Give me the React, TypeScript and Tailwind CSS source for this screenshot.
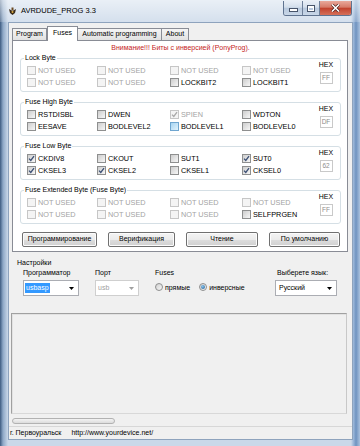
import React from 'react'

// ── Tipos ─────────────────────────────────────────────────────────────
type Cb = 'dis' | 'off' | 'on' | 'disOn' | 'hot'

interface Bit {
  label: string
  s: Cb
}

interface FuseGroup {
  title: string
  hex: string
  rows: Bit[][]
}

const nu: Bit = { label: 'NOT USED', s: 'dis' }

const groups: FuseGroup[] = [
  {
    title: 'Lock Byte',
    hex: 'FF',
    rows: [
      [nu, nu, nu, nu],
      [nu, nu, { label: 'LOCKBIT2', s: 'off' }, { label: 'LOCKBIT1', s: 'off' }],
    ],
  },
  {
    title: 'Fuse High Byte',
    hex: 'DF',
    rows: [
      [
        { label: 'RSTDISBL', s: 'off' },
        { label: 'DWEN', s: 'off' },
        { label: 'SPIEN', s: 'disOn' },
        { label: 'WDTON', s: 'off' },
      ],
      [
        { label: 'EESAVE', s: 'off' },
        { label: 'BODLEVEL2', s: 'off' },
        { label: 'BODLEVEL1', s: 'hot' },
        { label: 'BODLEVEL0', s: 'off' },
      ],
    ],
  },
  {
    title: 'Fuse Low Byte',
    hex: '62',
    rows: [
      [
        { label: 'CKDIV8', s: 'on' },
        { label: 'CKOUT', s: 'off' },
        { label: 'SUT1', s: 'off' },
        { label: 'SUT0', s: 'on' },
      ],
      [
        { label: 'CKSEL3', s: 'on' },
        { label: 'CKSEL2', s: 'on' },
        { label: 'CKSEL1', s: 'off' },
        { label: 'CKSEL0', s: 'on' },
      ],
    ],
  },
  {
    title: 'Fuse Extended Byte (Fuse Byte)',
    hex: 'FF',
    rows: [
      [nu, nu, nu, nu],
      [nu, nu, nu, { label: 'SELFPRGEN', s: 'off' }],
    ],
  },
]

// ── Controles ─────────────────────────────────────────────────────────
function Box({ s }: { s: Cb }) {
  const dis = s === 'dis' || s === 'disOn'
  const cls = dis
    ? 'flex w-[9px] h-[9px] shrink-0 items-center justify-center border border-[#c6c6c6] bg-[#f4f4f4]'
    : s === 'hot'
      ? 'flex w-[9px] h-[9px] shrink-0 items-center justify-center border border-[#6fa6d0] bg-[linear-gradient(135deg,#a6d4f2,#e2f3fc)]'
      : 'flex w-[9px] h-[9px] shrink-0 items-center justify-center border border-[#8e8f8f] bg-[linear-gradient(135deg,#cdcdcd,#f7f7f7)]'
  return (
    <span className={cls}>
      {(s === 'on' || s === 'disOn') && (
        <svg width="7" height="7" viewBox="0 0 7 7">
          <path
            d="M1 3.6 L2.8 5.5 L6 1.2"
            fill="none"
            stroke={s === 'on' ? '#3b4f74' : '#a8a8a8'}
            strokeWidth="1.3"
          />
        </svg>
      )}
    </span>
  )
}

function Check({ bit }: { bit: Bit }) {
  const dis = bit.s === 'dis' || bit.s === 'disOn'
  return (
    <div className="flex items-center">
      <Box s={bit.s} />
      <span className={`ml-[2px] text-[7.3px] leading-none ${dis ? 'text-[#a3a3a3]' : 'text-black'}`}>
        {bit.label}
      </span>
    </div>
  )
}

function Group({ g }: { g: FuseGroup }) {
  return (
    <fieldset className="rounded-[3px] border border-[#d5dfe5] pl-[6px] pb-[3px]">
      <legend className="-ml-[3px] px-[1px] text-[7px] leading-[8px] text-black">{g.title}</legend>
      <div className="flex">
        <div className="flex flex-col gap-[1px] pt-[3px]">
          {g.rows.map((row, i) => (
            <div key={i} className="grid grid-cols-[70px_73px_72px_70px] h-[11px] items-center">
              {row.map((b, j) => (
                <Check key={j} bit={b} />
              ))}
            </div>
          ))}
        </div>
        <div className="ml-auto w-[28px] flex flex-col items-center -mt-[1px]">
          <span className="text-[7px] leading-[8px] text-black">HEX</span>
          <span className="mt-[3px] w-[13px] h-[12px] border border-[#c9c9c9] bg-white flex items-center justify-center text-[6.5px] text-[#8c8c8c]">
            {g.hex}
          </span>
        </div>
      </div>
    </fieldset>
  )
}

function Button({ label, w }: { label: string; w: string }) {
  return (
    <div
      className={`${w} h-[15px] rounded-[2px] border border-[#707070] bg-[linear-gradient(180deg,#f4f4f4_0%,#ebebeb_50%,#dedede_50%,#d0d0d0_100%)] flex items-center justify-center text-[7px] text-black shadow-[inset_0_0_0_1px_#fcfcfc]`}
    >
      {label}
    </div>
  )
}

function Arrow({ gray }: { gray?: boolean }) {
  return (
    <svg width="5" height="3" viewBox="0 0 5 3" className="shrink-0">
      <path d="M0 0 H5 L2.5 3 Z" fill={gray ? '#a0a0a0' : '#000'} />
    </svg>
  )
}

function Radio({ on, label }: { on?: boolean; label: string }) {
  return (
    <div className="flex items-center">
      <span className="w-[8px] h-[8px] rounded-full border border-[#8e8f8f] bg-[linear-gradient(135deg,#d0d0d0,#f8f8f8)] flex items-center justify-center">
        {on && <span className="w-[4px] h-[4px] rounded-full bg-[radial-gradient(circle_at_40%_35%,#8ac4ec,#1c5a93)]" />}
      </span>
      <span className="ml-[2px] text-[7px] leading-none text-black">{label}</span>
    </div>
  )
}

// ── Janela ────────────────────────────────────────────────────────────
export default function App() {
  return (
    <div className="w-[360px] h-[446px] flex flex-col overflow-hidden font-['Liberation_Sans',Arial,sans-serif] bg-[linear-gradient(90deg,#3d5b80_0px,#8ea8c7_3px,#cad8e9_8px,#cad8e9_351px,#a2bcdc_353px,#6f93c0_356px,#aac1dd_360px)]">
      {/* Barra de título */}
      <div className="h-[22px] flex items-start bg-[linear-gradient(180deg,rgba(255,255,255,0.6),rgba(255,255,255,0.2))]">
        <svg width="9" height="9" viewBox="0 0 9 9" className="ml-[8px] mt-[7px]">
          <path d="M1 2 L4.5 4 L8 2 L7 6 L4.5 8 L2 6 Z" fill="#3a2a1a" />
          <rect x="3.5" y="0.5" width="2" height="3" fill="#6b4a22" />
          <circle cx="4.5" cy="5" r="1" fill="#e0b040" />
        </svg>
        <span className="ml-[4px] mt-[6px] text-[7.5px] leading-[9px] text-black">AVRDUDE_PROG 3.3</span>
        <div className="ml-auto mr-[8px] mt-[1px] flex h-[15px] rounded-b-[3px] border border-t-0 border-[#5f7390] overflow-hidden">
          <div className="w-[19px] flex items-center justify-center border-r border-[#6d7f99] bg-[linear-gradient(180deg,#e8eef6_0%,#d3deeb_45%,#b7c8dd_50%,#c9d7e8_100%)]">
            <span className="mt-[4px] w-[7px] h-[2px] bg-white border border-[#47546a] box-content" />
          </div>
          <div className="w-[17px] flex items-center justify-center border-r border-[#6d7f99] bg-[linear-gradient(180deg,#e8eef6_0%,#d3deeb_45%,#b7c8dd_50%,#c9d7e8_100%)]">
            <span className="w-[6px] h-[5px] border-[1.5px] border-t-[2px] border-white outline outline-1 outline-[#47546a]" />
          </div>
          <div className="w-[31px] flex items-center justify-center bg-[linear-gradient(180deg,#e9a99b_0%,#d67a68_45%,#c1412c_50%,#d5705a_100%)]">
            <svg width="9" height="8" viewBox="0 0 9 8">
              <path d="M1 0.5 L8 7.5 M8 0.5 L1 7.5" stroke="#4a1d18" strokeWidth="3" />
              <path d="M1 0.5 L8 7.5 M8 0.5 L1 7.5" stroke="#fff" strokeWidth="1.6" />
            </svg>
          </div>
        </div>
      </div>

      {/* Área cliente */}
      <div className="flex-1 ml-[8px] mr-[7px] mb-[6px] border border-[#8ea3bd] bg-[#f0f0f0] flex flex-col">
        {/* Abas */}
        <div className="pl-[3px] pr-[4px] pt-[3px]">
          <div className="flex items-end h-[14px] relative z-10">
            <div className="w-[35px] h-[12px] border border-b-0 border-[#898c95] bg-[linear-gradient(180deg,#f5f5f5,#e1e1e1)] flex items-center justify-center text-[7px] text-black">
              Program
            </div>
            <div className="w-[31px] h-[15px] -mb-[1px] border border-b-0 border-[#898c95] bg-white flex items-center justify-center text-[7px] text-black pb-[1px]">
              Fuses
            </div>
            <div className="w-[84px] h-[12px] border border-b-0 border-l-0 border-[#898c95] bg-[linear-gradient(180deg,#f5f5f5,#e1e1e1)] flex items-center justify-center text-[7px] text-black">
              Automatic programming
            </div>
            <div className="w-[27px] h-[12px] border border-b-0 border-l-0 border-[#898c95] bg-[linear-gradient(180deg,#f5f5f5,#e1e1e1)] flex items-center justify-center text-[7px] text-black">
              About
            </div>
          </div>

          {/* Página Fuses */}
          <div className="border border-[#898c95] bg-white pl-[7px] pr-[6px] pt-[3px] pb-[4px]">
            <div className="h-[8px] flex items-center justify-center text-[7px] text-[#c42424]">
              Внимание!!! Биты с инверсией (PonyProg).
            </div>
            <div className="mt-[2px] flex flex-col gap-[6px]">
              {groups.map((g) => (
                <Group key={g.title} g={g} />
              ))}
            </div>
            <div className="mt-[8px] flex justify-between pl-[2px] pr-[1px]">
              <Button label="Программирование" w="w-[75px]" />
              <Button label="Верификация" w="w-[67px]" />
              <Button label="Чтение" w="w-[72px]" />
              <Button label="По умолчанию" w="w-[71px]" />
            </div>
          </div>
        </div>

        {/* Настройки */}
        <div className="pl-[8px] mt-[7px] text-[7px] leading-[8px] text-black">Настройки</div>
        <div className="flex pl-[14px] mt-[2px]">
          <div className="flex flex-col">
            <span className="text-[7px] leading-[8px] text-black">Программатор</span>
            <div className="mt-[3px] w-[56px] h-[16px] border border-[#abadb3] bg-white flex items-center pl-[1px] pr-[4px]">
              <span className="bg-[#3399ff] text-white text-[7px] leading-[10px] px-[1px]">usbasp</span>
              <span className="ml-auto">
                <Arrow />
              </span>
            </div>
          </div>
          <div className="flex flex-col ml-[16px]">
            <span className="text-[7px] leading-[8px] text-black">Порт</span>
            <div className="mt-[3px] w-[44px] h-[16px] border border-[#cfcfcf] bg-white flex items-center pl-[2px] pr-[4px]">
              <span className="text-[#a0a0a0] text-[7px]">usb</span>
              <span className="ml-auto">
                <Arrow gray />
              </span>
            </div>
          </div>
          <div className="flex flex-col ml-[16px]">
            <span className="text-[7px] leading-[8px] text-black">Fuses</span>
            <div className="mt-[6px] flex items-center gap-[9px]">
              <Radio label="прямые" />
              <Radio on label="инверсные" />
            </div>
          </div>
          <div className="flex flex-col ml-auto mr-[15px]">
            <span className="text-[7px] leading-[8px] text-black pl-[2px]">Выберете язык:</span>
            <div className="mt-[3px] w-[62px] h-[16px] border border-[#abadb3] bg-white flex items-center pl-[3px] pr-[4px]">
              <span className="text-black text-[7px]">Русский</span>
              <span className="ml-auto">
                <Arrow />
              </span>
            </div>
          </div>
        </div>

        {/* Лог */}
        <div className="mt-[17px] ml-[2px] mr-[5px] h-[101px] border border-[#a0a0a0] border-r-[#c8c8c8] border-b-[#d8d8d8] bg-[#f0f0f0] shadow-[inset_1px_1px_0_#e2e2e2]" />

        {/* Статус */}
        <div className="mt-[4px] ml-[3px] w-[103px] h-[6px] rounded-[3px] border border-[#b2b2b2] bg-[linear-gradient(180deg,#f3f3f3,#dcdcdc)]" />
        <div className="mt-[2px] flex-1 border-t border-[#d7d7d7] flex items-center text-[7px] text-black">
          <span className="ml-[1px]">г. Первоуральск</span>
          <span className="ml-[10px]">http://www.yourdevice.net/</span>
        </div>
      </div>
    </div>
  )
}
